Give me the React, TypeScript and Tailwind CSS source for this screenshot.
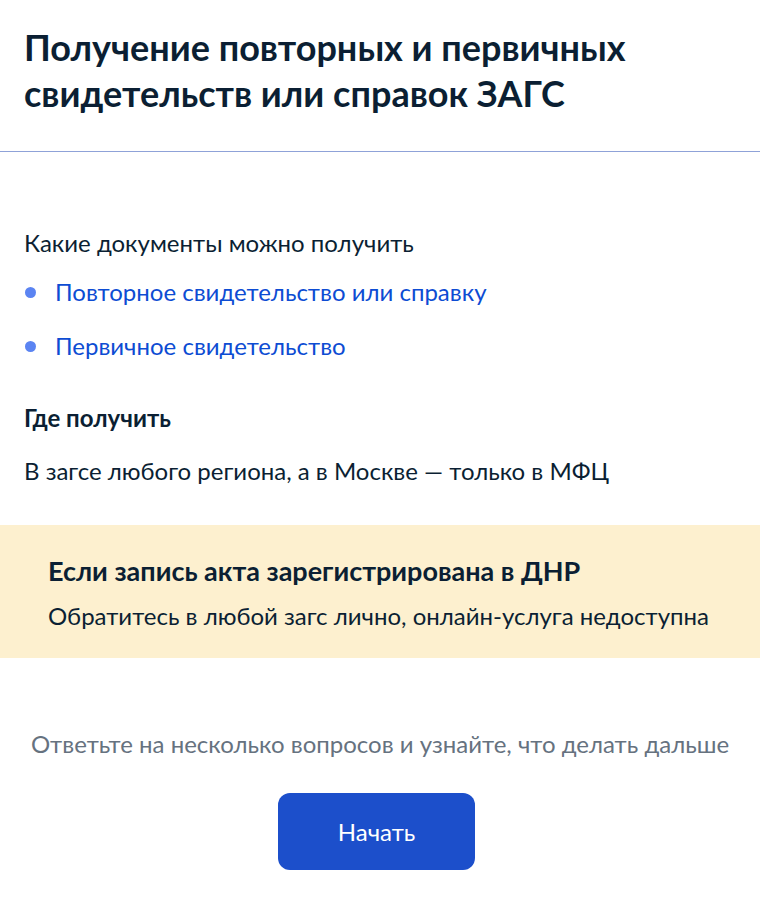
const docs = ["Повторное свидетельство или справку", "Первичное свидетельство"];

export default function App() {
  return (
    <div className="min-h-[903px] w-[760px] bg-white font-['Lato','Noto_Sans',sans-serif] text-[#0b1f33]">
      <header className="px-6 pb-[35px] pt-[24px]">
        <h1 className="text-[36px] font-bold leading-[46px]">
          Получение повторных и первичных свидетельств или справок ЗАГС
        </h1>
      </header>
      <div className="h-px bg-[#8fa2d8]" />

      <section className="px-6 pt-[75px]">
        <p className="text-[24px] leading-[32px]">Какие документы можно получить</p>
        <ul className="mt-[17px] flex flex-col gap-[22px]">
          {docs.map((d) => (
            <li key={d} className="flex items-center gap-[19px]">
              <span className="ml-[1px] h-[11px] w-[11px] shrink-0 rounded-full bg-[#5b84f2]" />
              <a href="#" className="text-[24px] leading-[32px] text-[#0d4cd3]">
                {d}
              </a>
            </li>
          ))}
        </ul>

        <h2 className="mt-[40px] text-[24px] font-bold leading-[32px]">Где получить</h2>
        <p className="mt-[21px] text-[24px] leading-[32px]">
          В загсе любого региона, а в Москве — только в МФЦ
        </p>
      </section>

      <div className="mt-[38px] bg-[#fdf0cf] px-12 pb-[26px] pt-[28px]">
        <h3 className="text-[27px] font-bold leading-[36px]">Если запись акта зарегистрирована в ДНР</h3>
        <p className="mt-[11px] text-[24px] leading-[32px]">
          Обратитесь в любой загс лично, онлайн-услуга недоступна
        </p>
      </div>

      <div className="flex flex-col items-center pt-[70px]">
        <p className="text-[24px] leading-[32px] text-[#66727f]">
          Ответьте на несколько вопросов и узнайте, что делать дальше
        </p>
        <button className="mr-[7px] mt-[33px] h-[77px] w-[197px] rounded-[12px] bg-[#1c4fcb] text-[24px] text-white">
          Начать
        </button>
      </div>
    </div>
  );
}
